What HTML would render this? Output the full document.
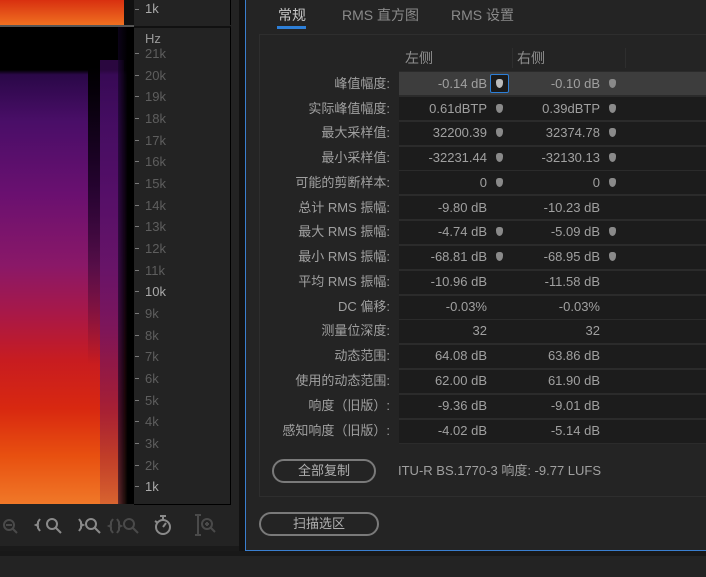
<!DOCTYPE html>
<html><head><meta charset="utf-8"><style>
*{margin:0;padding:0;box-sizing:border-box}
body{width:706px;height:577px;overflow:hidden;background:#232323;font-family:"Liberation Sans","Noto Sans CJK SC",sans-serif;color:#a8a8a8;position:relative;font-size:13px;line-height:16px}
.a{position:absolute}
.axl{left:145px;font-size:13px;color:#5e5e5e;line-height:14px}
.tk{left:135px;width:4px;height:1px;background:#7a7a7a}
.lbl{position:absolute;right:316px;text-align:right;font-size:13px;color:#a0a0a0;white-space:nowrap;line-height:16px}
.v1,.v2{position:absolute;text-align:right;font-size:13px;color:#a0a0a0;white-space:nowrap;line-height:16px}
.v1{right:219px}.v2{right:106px}
.m{position:absolute;width:7px;height:9px;background:#8a8a8a;border-radius:3px 3px 4px 4px/3px 3px 6px 6px}
.row{position:absolute;left:399px;width:307px;height:23px;background:#1c1c1c}
.btn{position:absolute;border:2px solid #7a7a7a;border-radius:12px;text-align:center;font-size:13px;color:#b0b0b0;line-height:20px}
</style></head><body>
<!-- spectrogram top -->
<div class="a" style="left:0;top:0;width:124px;height:25px;background:linear-gradient(to bottom,#d83010,#f07020)"></div>
<div class="a" style="left:124px;top:0;width:10px;height:25px;background:#111"></div>
<div class="a" style="left:0;top:25px;width:134px;height:2px;background:#555"></div>
<div class="a" style="left:0;top:27px;width:134px;height:477px;background:linear-gradient(to bottom,#000 0,#000 9%,#2a0848 10%,#4a0e68 20%,#6a1070 35%,#8a1868 50%,#a81848 60%,#c81c20 70%,#d82810 80%,#e85010 90%,#f07828 100%)"></div>
<div class="a" style="left:88px;top:65px;width:12px;height:300px;background:linear-gradient(to bottom,#000,rgba(20,0,30,.8) 40%,rgba(60,10,80,0))"></div>
<div class="a" style="left:100px;top:60px;width:24px;height:444px;background:linear-gradient(to bottom,rgba(60,10,90,.7),rgba(90,20,110,.6) 60%,rgba(120,20,80,.2))"></div>
<div class="a" style="left:118px;top:27px;width:16px;height:477px;background:linear-gradient(to right,rgba(20,5,40,.6),#000 60%)"></div>
<div class="a" style="left:134px;top:0;width:97px;height:25px;background:#232323;border-right:1px solid #000"></div>
<div class="a" style="left:134px;top:26px;width:97px;height:479px;background:#232323;border:1px solid #000;border-left:none;border-top:2px solid #111"></div>
<div class="a tk" style="top:9px"></div><div class="a axl" style="top:2px;color:#aaa">1k</div>
<div class="a axl" style="top:32px;color:#999">Hz</div>
<div class="a tk" style="top:53px"></div><div class="a axl" style="top:47px">21k</div>
<div class="a tk" style="top:75px"></div><div class="a axl" style="top:69px">20k</div>
<div class="a tk" style="top:96px"></div><div class="a axl" style="top:90px">19k</div>
<div class="a tk" style="top:118px"></div><div class="a axl" style="top:112px">18k</div>
<div class="a tk" style="top:140px"></div><div class="a axl" style="top:134px">17k</div>
<div class="a tk" style="top:161px"></div><div class="a axl" style="top:155px">16k</div>
<div class="a tk" style="top:183px"></div><div class="a axl" style="top:177px">15k</div>
<div class="a tk" style="top:205px"></div><div class="a axl" style="top:199px">14k</div>
<div class="a tk" style="top:226px"></div><div class="a axl" style="top:220px">13k</div>
<div class="a tk" style="top:248px"></div><div class="a axl" style="top:242px">12k</div>
<div class="a tk" style="top:270px"></div><div class="a axl" style="top:264px">11k</div>
<div class="a tk" style="top:291px"></div><div class="a axl" style="top:285px;color:#aaa">10k</div>
<div class="a tk" style="top:313px"></div><div class="a axl" style="top:307px">9k</div>
<div class="a tk" style="top:335px"></div><div class="a axl" style="top:329px">8k</div>
<div class="a tk" style="top:356px"></div><div class="a axl" style="top:350px">7k</div>
<div class="a tk" style="top:378px"></div><div class="a axl" style="top:372px">6k</div>
<div class="a tk" style="top:400px"></div><div class="a axl" style="top:394px">5k</div>
<div class="a tk" style="top:421px"></div><div class="a axl" style="top:415px">4k</div>
<div class="a tk" style="top:443px"></div><div class="a axl" style="top:437px">3k</div>
<div class="a tk" style="top:465px"></div><div class="a axl" style="top:459px">2k</div>
<div class="a tk" style="top:486px"></div><div class="a axl" style="top:480px;color:#aaa">1k</div>
<!-- toolbar icons -->
<svg class="a" style="left:0;top:510px" width="230" height="36" viewBox="0 0 230 36" fill="none" stroke-width="2">
<g stroke="#4a4a4a"><circle cx="9" cy="15" r="5"/><path d="M6 15h6M13 19l4 4"/></g>
<g stroke="#8a8a8a"><path d="M40 9l-2 3v2l-2 1 2 1v2l2 3"/><circle cx="52" cy="14" r="5"/><path d="M56 18l5 5"/>
<path d="M79 9l2 3v2l2 1-2 1v2l-2 3"/><circle cx="91" cy="14" r="5"/><path d="M95 18l5 5"/></g>
<g stroke="#4a4a4a"><path d="M113 9l-2 3v3l-2 1 2 1v3l2 3M117 9l2 3v3l2 1-2 1v3l-2 3"/><circle cx="129" cy="14" r="5"/><path d="M133 18l5 5"/>
<path d="M195 5h6M198 5v20M195 25h6"/><circle cx="207" cy="14" r="5"/><path d="M205 14h4M207 12v4M211 18l4 4"/></g>
<g stroke="#8a8a8a"><circle cx="163" cy="17" r="7"/><path d="M160 6h6M163 6v4M163 17l3-4M155 11l3 2"/></g>
</svg>
<div class="a" style="left:0;top:546px;width:239px;height:5px;background:#1a1a1a"></div>
<!-- right panel -->
<div class="a" style="left:239px;top:0;width:6px;height:551px;background:#121212"></div>
<div class="a" style="left:245px;top:0;width:461px;height:551px;background:#242424;border-left:1px solid #3a7fd0;border-bottom:1px solid #3a7fd0"></div>
<div class="a" style="left:0;top:551px;width:706px;height:5px;background:#181818"></div>
<div class="a" style="left:278px;top:7px;font-size:14px;color:#c8c8c8">常规</div>
<div class="a" style="left:277px;top:26px;width:29px;height:3px;background:#2d7fd8"></div>
<div class="a" style="left:342px;top:7px;font-size:14px;color:#8a8a8a">RMS 直方图</div>
<div class="a" style="left:451px;top:7px;font-size:14px;color:#8a8a8a">RMS 设置</div>
<div class="a" style="left:259px;top:34px;width:447px;height:463px;border:1px solid #2e2e2e;border-right:none"></div>
<div class="a" style="left:405px;top:50px;font-size:14px;color:#909090">左侧</div>
<div class="a" style="left:512px;top:48px;width:1px;height:20px;background:#2e2e2e"></div>
<div class="a" style="left:517px;top:50px;font-size:14px;color:#909090">右侧</div>
<div class="a" style="left:625px;top:48px;width:1px;height:20px;background:#2e2e2e"></div>
<div class="a" style="left:399px;top:71px;width:307px;height:373px;background:#2b2b2b"></div>
<div class="row" style="top:72px;background:#3d3d3d"></div>
<div class="row" style="top:97px"></div><div class="row" style="top:122px"></div><div class="row" style="top:147px"></div>
<div class="row" style="top:171px"></div><div class="row" style="top:196px"></div><div class="row" style="top:221px"></div>
<div class="row" style="top:246px"></div><div class="row" style="top:271px"></div><div class="row" style="top:296px"></div>
<div class="row" style="top:320px"></div><div class="row" style="top:345px"></div><div class="row" style="top:370px"></div>
<div class="row" style="top:395px"></div><div class="row" style="top:420px"></div>
<div class="a" style="left:490px;top:74px;width:19px;height:19px;border:1px solid #2d7fd8;background:#1a1a1a;border-radius:2px"></div>

<div class="lbl" style="top:76px">峰值幅度:</div><div class="v1" style="top:76px">-0.14 dB</div><div class="v2" style="top:76px">-0.10 dB</div>
<div class="lbl" style="top:101px">实际峰值幅度:</div><div class="v1" style="top:101px">0.61dBTP</div><div class="v2" style="top:101px">0.39dBTP</div>
<div class="lbl" style="top:125px">最大采样值:</div><div class="v1" style="top:125px">32200.39</div><div class="v2" style="top:125px">32374.78</div>
<div class="lbl" style="top:150px">最小采样值:</div><div class="v1" style="top:150px">-32231.44</div><div class="v2" style="top:150px">-32130.13</div>
<div class="lbl" style="top:175px">可能的剪断样本:</div><div class="v1" style="top:175px">0</div><div class="v2" style="top:175px">0</div>
<div class="lbl" style="top:200px">总计 RMS 振幅:</div><div class="v1" style="top:200px">-9.80 dB</div><div class="v2" style="top:200px">-10.23 dB</div>
<div class="lbl" style="top:224px">最大 RMS 振幅:</div><div class="v1" style="top:224px">-4.74 dB</div><div class="v2" style="top:224px">-5.09 dB</div>
<div class="lbl" style="top:249px">最小 RMS 振幅:</div><div class="v1" style="top:249px">-68.81 dB</div><div class="v2" style="top:249px">-68.95 dB</div>
<div class="lbl" style="top:274px">平均 RMS 振幅:</div><div class="v1" style="top:274px">-10.96 dB</div><div class="v2" style="top:274px">-11.58 dB</div>
<div class="lbl" style="top:299px">DC 偏移:</div><div class="v1" style="top:299px">-0.03%</div><div class="v2" style="top:299px">-0.03%</div>
<div class="lbl" style="top:323px">测量位深度:</div><div class="v1" style="top:323px">32</div><div class="v2" style="top:323px">32</div>
<div class="lbl" style="top:348px">动态范围:</div><div class="v1" style="top:348px">64.08 dB</div><div class="v2" style="top:348px">63.86 dB</div>
<div class="lbl" style="top:373px">使用的动态范围:</div><div class="v1" style="top:373px">62.00 dB</div><div class="v2" style="top:373px">61.90 dB</div>
<div class="lbl" style="top:398px">响度（旧版）:</div><div class="v1" style="top:398px">-9.36 dB</div><div class="v2" style="top:398px">-9.01 dB</div>
<div class="lbl" style="top:423px">感知响度（旧版）:</div><div class="v1" style="top:423px">-4.02 dB</div><div class="v2" style="top:423px">-5.14 dB</div>

<div class="m" style="left:496px;top:79px;background:#bbb"></div><div class="m" style="left:609px;top:79px"></div>
<div class="m" style="left:496px;top:104px"></div><div class="m" style="left:609px;top:104px"></div>
<div class="m" style="left:496px;top:128px"></div><div class="m" style="left:609px;top:128px"></div>
<div class="m" style="left:496px;top:153px"></div><div class="m" style="left:609px;top:153px"></div>
<div class="m" style="left:496px;top:178px"></div><div class="m" style="left:609px;top:178px"></div>
<div class="m" style="left:496px;top:227px"></div><div class="m" style="left:609px;top:227px"></div>
<div class="m" style="left:496px;top:252px"></div><div class="m" style="left:609px;top:252px"></div>

<div class="btn" style="left:272px;top:459px;width:104px;height:24px">全部复制</div>
<div class="a" style="left:398px;top:463px;font-size:13px;color:#a0a0a0">ITU-R BS.1770-3 响度: -9.77 LUFS</div>
<div class="btn" style="left:259px;top:512px;width:120px;height:24px">扫描选区</div>
</body></html>
